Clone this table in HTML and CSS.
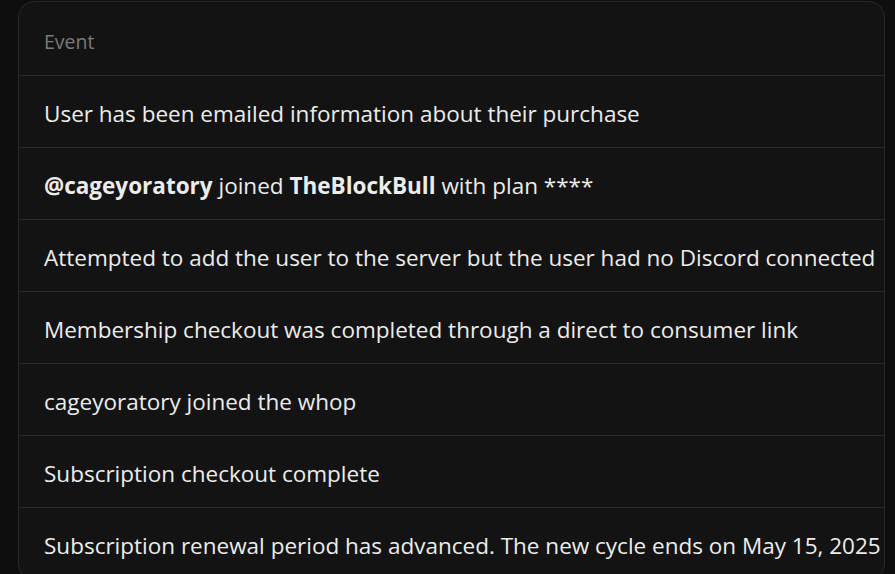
FILE: index.html
```html
<!DOCTYPE html>
<html lang="en">
<head>
    <meta charset="UTF-8">
    <title>Events</title>
    <link rel="stylesheet" href="styles.css">
</head>
<body>
    <div class="card">
        <div class="row head">Event</div>
        <div class="row">User has been emailed information about their purchase</div>
        <div class="row"><b>@cageyoratory</b> joined <b>TheBlockBull</b> with plan ****</div>
        <div class="row">Attempted to add the user to the server but the user had no Discord connected</div>
        <div class="row">Membership checkout was completed through a direct to consumer link</div>
        <div class="row">cageyoratory joined the whop</div>
        <div class="row">Subscription checkout complete</div>
        <div class="row">Subscription renewal period has advanced. The new cycle ends on May 15, 2025</div>
    </div>
</body>
</html>
```

FILE: styles.css
```css
body {
    margin: 0;
    padding: 1px 10px 0 18px;
    background-color: #0e0e0e;
    font-family: "Open Sans", "Noto Sans", sans-serif;
    color: #ececec;
    height: 573px;
    overflow: hidden;
}
.card {
    background-color: #131313;
    border: 1px solid #282828;
    border-radius: 16px;
    overflow: hidden;
}
.row {
    height: 71px;
    line-height: 75px;
    padding-left: 25px;
    font-size: 22.5px;
    white-space: nowrap;
    border-top: 1px solid #282828;
}
.row b {
    font-weight: 700;
}
.head {
    height: 73px;
    line-height: 80px;
    border-top: none;
    font-size: 19.5px;
    color: #7a7a7a;
}
```
